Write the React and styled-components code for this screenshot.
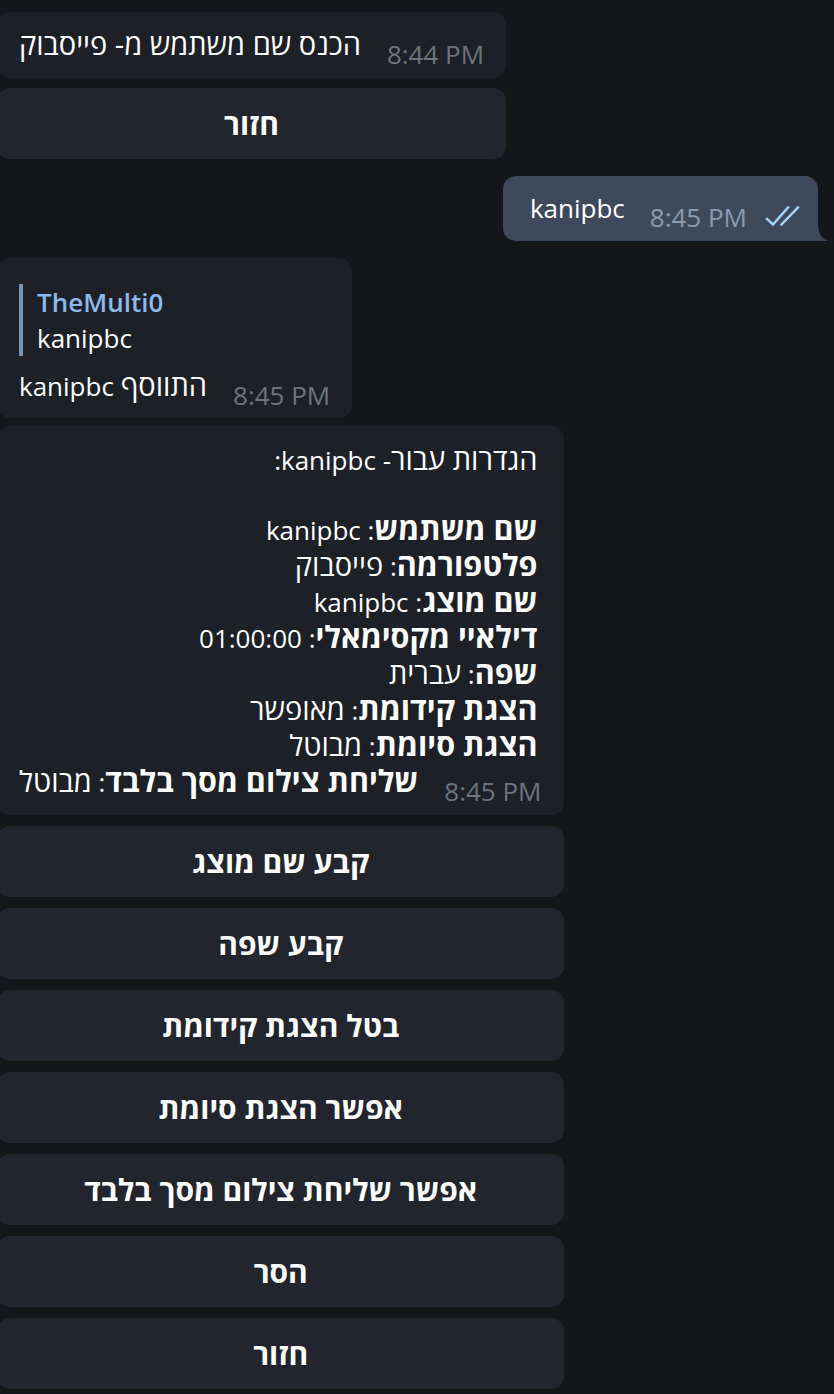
import React from 'react';
import styled, { createGlobalStyle } from 'styled-components';

const GlobalStyle = createGlobalStyle`
    html, body {
        margin: 0;
        padding: 0;
        background: #14161a;
        overflow: hidden;
    }
    body {
        font-family: "Open Sans", "Noto Sans", sans-serif;
        color: #ffffff;
    }
`;

const Chat = styled.div`
    width: 834px;
    height: 1394px;
    display: flex;
    flex-direction: column;
    padding: 12px 4px 0 0;
    box-sizing: border-box;
    overflow: hidden;
`;

const IncomingGroup = styled.div`
    display: flex;
    flex-direction: column;
    gap: ${(p) => p.$gap || 10}px;
    width: fit-content;
    margin-left: -3px;
    margin-top: ${(p) => p.$mt || 0}px;
`;

const Bubble = styled.div`
    background: #1e2027;
    border-radius: 13px;
    padding: ${(p) => p.$pad || '15px 22px 15px 22px'};
    font-size: 26px;
    line-height: 36px;
`;

const OutRow = styled.div`
    display: flex;
    justify-content: flex-end;
    padding-right: 12px;
    margin-top: ${(p) => p.$mt || 0}px;
`;

const OutBubble = styled.div`
    position: relative;
    background: #3e4a5b;
    border-radius: 13px 13px 0 13px;
    padding: 14px 16px 15px 27px;
    font-size: 26px;
    line-height: 36px;
    display: flex;
    align-items: flex-end;

    &::before {
        content: '';
        position: absolute;
        right: -12px;
        bottom: 0;
        width: 12px;
        height: 16px;
        background: #3e4a5b;
    }

    &::after {
        content: '';
        position: absolute;
        right: -12px;
        bottom: 0;
        width: 12px;
        height: 16px;
        background: #14161a;
        border-bottom-left-radius: 12px 16px;
    }
`;

const Line = styled.div`
    display: flex;
    align-items: flex-end;
    justify-content: space-between;
`;

const Text = styled.span`
    white-space: pre;
    direction: ${(p) => p.$dir || 'rtl'};
`;

// Hebrew glyphs in the original come from a wider fallback face
const He = styled.span`
    font-size: 29px;
    line-height: 1;
`;

const Key = styled.b`
    font-weight: 700;

    ${He} {
        font-size: 30.5px;
    }
`;

const Time = styled.span`
    font-size: 26px;
    line-height: 24px;
    color: ${(p) => (p.$out ? '#8a9bb2' : '#6c747f')};
    margin-left: ${(p) => p.$gap || 26}px;
    margin-bottom: -3px;
    white-space: nowrap;
`;

const Checks = styled.svg`
    margin-left: 18px;
    flex: none;
`;

const Quote = styled.div`
    border-left: 4px solid #7a93b4;
    padding-left: 14px;
    margin-bottom: 12px;
`;

const QuoteName = styled.div`
    color: #8cb8ee;
    font-weight: 600;
`;

const Lines = styled.div`
    direction: rtl;
    text-align: right;
    padding-right: 4px;
`;

const Blank = styled.div`
    height: 34px;
`;

const Keyboard = styled.div`
    display: flex;
    flex-direction: column;
    gap: ${(p) => p.$gap || 11}px;
`;

const KeyButton = styled.button`
    height: 71px;
    border: none;
    border-radius: 13px;
    background: #22252d;
    color: #ffffff;
    font-family: "Open Sans", "Noto Sans", sans-serif;
    font-size: 30px;
    font-weight: 700;
    direction: rtl;
    cursor: pointer;
    padding: 0 20px;
`;

const heb = (str) =>
    str.split(/([\u0590-\u05FF][\u0590-\u05FF\s-]*[\u0590-\u05FF]|[\u0590-\u05FF])/).map((part, i) =>
        /[\u0590-\u05FF]/.test(part) ? <He key={i}>{part}</He> : part
    );

const settings = [
    ['שם משתמש', 'kanipbc'],
    ['פלטפורמה', 'פייסבוק'],
    ['שם מוצג', 'kanipbc'],
    ['דילאיי מקסימאלי', '01:00:00'],
    ['שפה', 'עברית'],
    ['הצגת קידומת', 'מאופשר'],
    ['הצגת סיומת', 'מבוטל'],
];

const buttons = [
    'קבע שם מוצג',
    'קבע שפה',
    'בטל הצגת קידומת',
    'אפשר הצגת סיומת',
    'אפשר שליחת צילום מסך בלבד',
    'הסר',
    'חזור',
];

const DoubleCheck = () => (
    <Checks width="37" height="21" viewBox="0 0 37 21" fill="none" stroke="#a6d2fb" strokeWidth="2.4" strokeLinecap="square">
        <path d="M2 14 L8 19.5 L23 2.5" />
        <path d="M16.5 19.5 L33 2.5" />
    </Checks>
);

const App = () => {
    return (
        <>
            <GlobalStyle />
            <Chat>
                <IncomingGroup $gap={10}>
                    <Bubble>
                        <Line>
                            <Text>{heb('הכנס שם משתמש מ- פייסבוק')}</Text>
                            <Time>8:44 PM</Time>
                        </Line>
                    </Bubble>
                    <Keyboard>
                        <KeyButton>חזור</KeyButton>
                    </Keyboard>
                </IncomingGroup>

                <OutRow $mt={17}>
                    <OutBubble>
                        <Text $dir="ltr">kanipbc</Text>
                        <Time $out $gap={25}>8:45 PM</Time>
                        <DoubleCheck />
                    </OutBubble>
                </OutRow>

                <IncomingGroup $mt={17}>
                    <Bubble $pad="26px 22px 14px 22px">
                        <Quote>
                            <QuoteName>TheMulti0</QuoteName>
                            <div>kanipbc</div>
                        </Quote>
                        <Line>
                            <Text $dir="ltr">kanipbc {heb('התווסף')}</Text>
                            <Time>8:45 PM</Time>
                        </Line>
                    </Bubble>
                </IncomingGroup>

                <IncomingGroup $mt={8} $gap={11}>
                    <Bubble $pad="16px 23px 15px 22px">
                        <Lines>
                            <div>{heb('הגדרות עבור-')} kanipbc:</div>
                            <Blank />
                            {settings.map(([k, v]) => (
                                <div key={k}>
                                    <Key>{heb(k)}</Key>: {heb(v)}
                                </div>
                            ))}
                        </Lines>
                        <Line>
                            <Text>
                                <Key>{heb('שליחת צילום מסך בלבד')}</Key>: {heb('מבוטל')}
                            </Text>
                            <Time>8:45 PM</Time>
                        </Line>
                    </Bubble>
                    <Keyboard>
                        {buttons.map((b) => (
                            <KeyButton key={b}>{b}</KeyButton>
                        ))}
                    </Keyboard>
                </IncomingGroup>
            </Chat>
        </>
    );
};

export default App;
